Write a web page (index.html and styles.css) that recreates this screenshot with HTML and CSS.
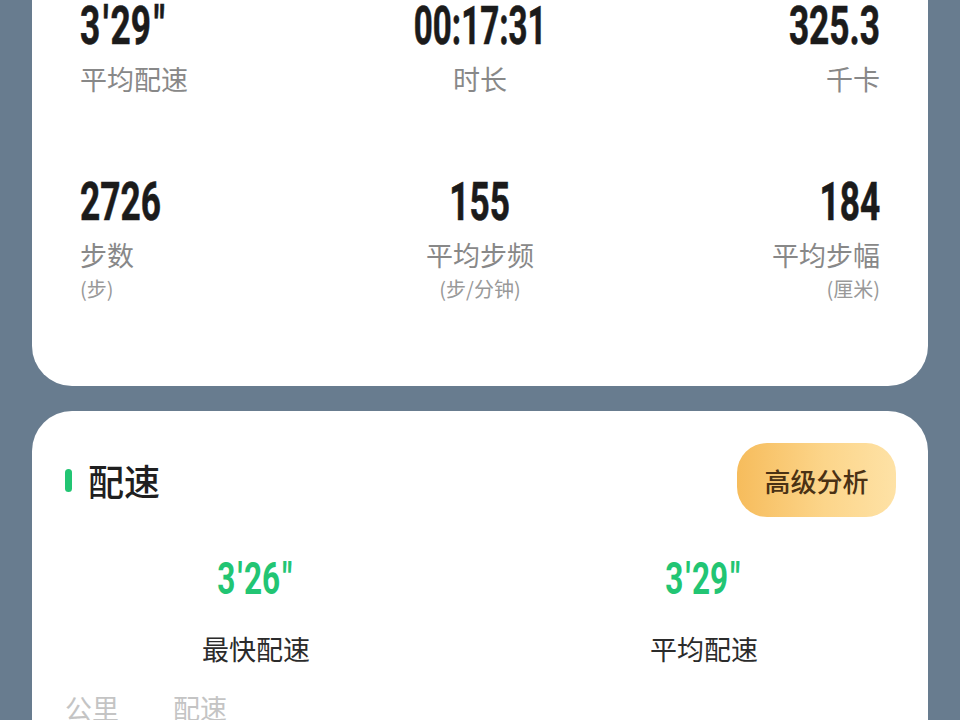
FILE: index.html
```html
<!DOCTYPE html>
<html lang="zh-CN">
<head>
<meta charset="utf-8">
<title>运动详情</title>
<link rel="stylesheet" href="styles.css">
</head>
<body>
<div class="page">
  <section class="card summary">
    <div class="stats">
      <div class="stat left">
        <div class="value"><span class="num">3<span class="q">'</span>29<span class="q">"</span></span></div>
        <div class="label">平均配速</div>
      </div>
      <div class="stat mid">
        <div class="value"><span class="num time">00:17:31</span></div>
        <div class="label">时长</div>
      </div>
      <div class="stat right">
        <div class="value"><span class="num">325.3</span></div>
        <div class="label">千卡</div>
      </div>
      <div class="stat left row2">
        <div class="value"><span class="num">2726</span></div>
        <div class="label">步数</div>
        <div class="sub">(步)</div>
      </div>
      <div class="stat mid row2">
        <div class="value"><span class="num">155</span></div>
        <div class="label">平均步频</div>
        <div class="sub">(步/分钟)</div>
      </div>
      <div class="stat right row2">
        <div class="value"><span class="num">184</span></div>
        <div class="label">平均步幅</div>
        <div class="sub">(厘米)</div>
      </div>
    </div>
  </section>

  <section class="card pace">
    <div class="pace-head">
      <div class="title"><span class="bar"></span><span class="title-text">配速</span></div>
      <button class="adv">高级分析</button>
    </div>
    <div class="pace-stats">
      <div class="pstat">
        <div class="pvalue"><span class="pnum">3<span class="q">'</span>26<span class="q">"</span></span></div>
        <div class="plabel">最快配速</div>
      </div>
      <div class="pstat">
        <div class="pvalue"><span class="pnum">3<span class="q">'</span>29<span class="q">"</span></span></div>
        <div class="plabel">平均配速</div>
      </div>
    </div>
    <div class="table-head">
      <span class="th th-km">公里</span>
      <span class="th">配速</span>
    </div>
  </section>
</div>
</body>
</html>
```

FILE: styles.css
```css
html, body {
  margin: 0;
  padding: 0;
}
body {
  background: #687c8f;
  font-family: "Noto Sans CJK SC", "Noto Sans", sans-serif;
  overflow: hidden;
  height: 720px;
}
.page {
  padding: 0 32px;
}
.card {
  background: #ffffff;
}
.summary {
  border-radius: 0 0 40px 40px;
  padding: 0 48px 85px;
}
.stats {
  display: grid;
  grid-template-columns: 1fr 1fr 1fr;
  row-gap: 81px;
}
.stat.left { text-align: left; }
.stat.mid { text-align: center; }
.stat.right { text-align: right; }

.value {
  height: 52px;
  line-height: 52px;
  font-family: Roboto, "Liberation Sans", sans-serif;
  font-weight: 700;
  font-size: 53px;
  color: #1b1b1b;
  white-space: nowrap;
}
.num {
  display: inline-block;
  transform: scaleX(0.665);
  -webkit-text-stroke: 0.6px #1b1b1b;
}
.num.time {
  transform: scaleX(0.625);
}
.q {
  display: inline-block;
  margin: 0 3px 0 4px;
}
.left .num { transform-origin: left center; }
.mid .num { transform-origin: center center; }
.right .num { transform-origin: right center; }

.label {
  margin-top: 11px;
  font-size: 27px;
  line-height: 32px;
  color: #888888;
}
.sub {
  margin-top: 6px;
  font-size: 20px;
  line-height: 24px;
  color: #999999;
}

.pace {
  margin-top: 25px;
  border-radius: 40px 40px 0 0;
  padding: 32px 32px 0 33px;
  height: 400px;
}
.pace-head {
  display: flex;
  align-items: center;
  justify-content: space-between;
}
.title {
  display: flex;
  align-items: center;
  gap: 16px;
}
.bar {
  width: 7px;
  height: 23px;
  border-radius: 4px;
  background: #22c573;
}
.title-text {
  font-size: 36px;
  line-height: 40px;
  font-weight: 500;
  color: #1f1f1f;
}
.adv {
  width: 159px;
  height: 74px;
  border: 0;
  border-radius: 30px;
  background: linear-gradient(90deg, #f6bc5c 0%, #fcd58a 55%, #fee2a6 100%);
  font-family: "Noto Sans CJK SC", sans-serif;
  font-size: 26px;
  font-weight: 500;
  color: #4a3114;
  padding: 0;
}
.pace-stats {
  display: grid;
  grid-template-columns: 1fr 1fr;
  margin: 39px -32px 0 -33px;
}
.pstat {
  text-align: center;
}
.pvalue {
  height: 45px;
  line-height: 45px;
  font-family: Roboto, "Liberation Sans", sans-serif;
  font-weight: 700;
  font-size: 45px;
  color: #22c573;
}
.pnum {
  display: inline-block;
  transform: scaleX(0.7);
  transform-origin: center center;
}
.pnum .q {
  margin: 0 2px 0 3px;
}
.plabel {
  margin-top: 32px;
  font-size: 27px;
  line-height: 32px;
  color: #2b2b2b;
}
.table-head {
  margin-top: 27px;
  display: flex;
  gap: 54px;
}
.th {
  font-size: 27px;
  line-height: 32px;
  color: #c4c4c4;
}
```
